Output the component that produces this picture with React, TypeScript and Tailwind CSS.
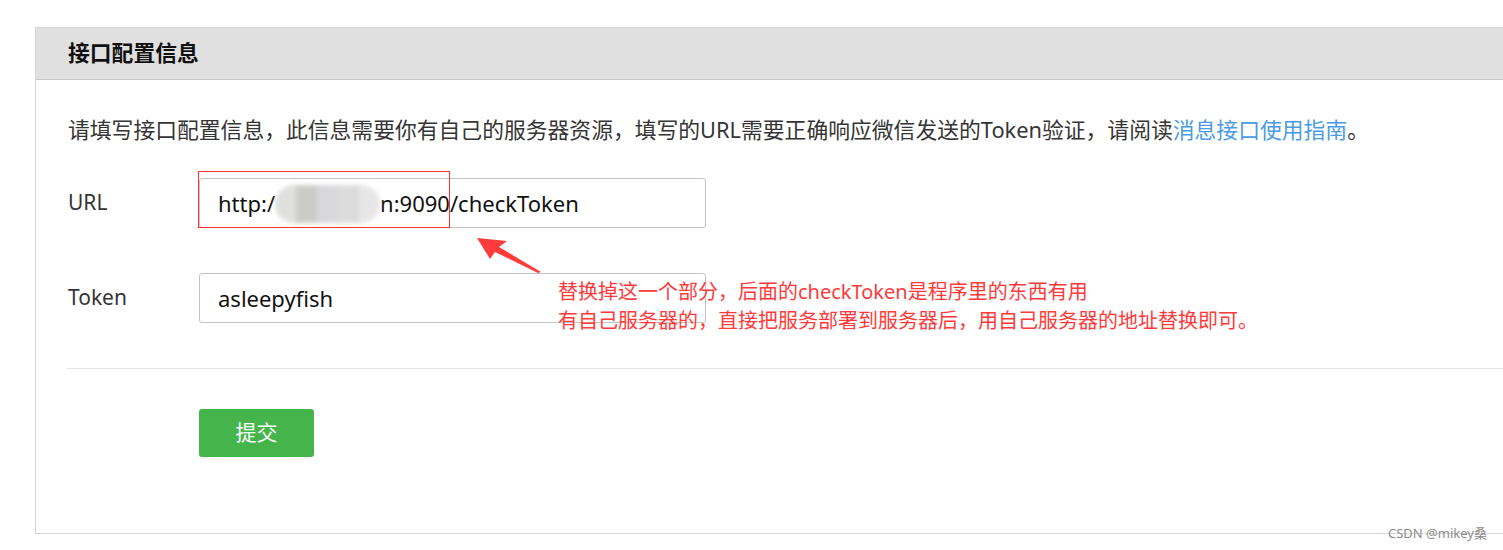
import React from "react";

export default function App() {
  return (
    <div className="relative w-[1503px] h-[550px] overflow-hidden bg-white font-['Noto_Sans','Noto_Sans_CJK_SC',sans-serif] text-[#353535]">
      <div className="pt-[27px] pl-[35px]">
        <div className="h-[507px] border border-r-0 border-[#d6d6d6]">
          <div className="flex h-[52px] items-center border-b border-[#c9c9c9] bg-[#e0e0e0] pl-[32px] text-[21.8px] font-bold text-[#111]">
            接口配置信息
          </div>
          <div className="pl-[32px] pt-[35px]">
            <p className="h-[30px] text-[21.8px] leading-[30px] whitespace-nowrap">
              请填写接口配置信息，此信息需要你有自己的服务器资源，填写的URL需要正确响应微信发送的Token验证，请阅读
              <span className="text-[#4a9be6]">消息接口使用指南</span>。
            </p>
            <div className="mt-[33px] flex items-center">
              <div className="w-[131px] text-[21px]">URL</div>
              <div className="flex h-[50px] w-[507px] items-center rounded-[3px] border border-[#c3c3c3] pl-[18px] text-[22px] text-[#111] whitespace-nowrap">
                <span>http:/</span>
                <span className="relative inline-block h-[40px] w-[105px]">
                  <span className="absolute left-0 top-[2px] flex h-[38px] w-[105px] overflow-hidden rounded-full opacity-90 blur-[2px]">
                    <span className="h-full w-[21px] bg-[#dcdcda]" />
                    <span className="h-full w-[21px] bg-[#c6c6c4]" />
                    <span className="h-full w-[21px] bg-[#d4d4d7]" />
                    <span className="h-full w-[21px] bg-[#d9d9d9]" />
                    <span className="h-full w-[21px] bg-[#e4e4e6]" />
                  </span>
                </span>
                <span>n:9090/checkToken</span>
              </div>
            </div>
            <div className="mt-[45px] flex items-center">
              <div className="w-[131px] text-[21px]">Token</div>
              <div className="flex h-[50px] w-[507px] items-center rounded-[3px] border border-[#c3c3c3] pl-[18px] text-[22px] text-[#111]">
                asleepyfish
              </div>
            </div>
          </div>
          <div className="ml-[31px] mt-[45px] h-px bg-[#e3e3e3]" />
          <div className="pl-[163px] pt-[40px]">
            <button className="flex h-[48px] w-[115px] items-center justify-center rounded-[3px] bg-[#45b54b] text-[21px] text-white">
              提交
            </button>
          </div>
        </div>
      </div>

      {/* annotation box */}
      <div className="absolute left-[198px] top-[171px] h-[57px] w-[252px] border border-[#ff3030]" />

      {/* arrow */}
      <svg className="absolute left-0 top-0" width="1503" height="550">
        <polygon
          points="477,238 507,241 499,247 541,272 538,273 495,252 490,259"
          fill="#ff3b3b"
        />
      </svg>

      {/* annotation text */}
      <div className="absolute left-[558px] top-[277px] text-[20px] leading-[29px] text-[#ff3a3a] whitespace-nowrap">
        <div>替换掉这一个部分，后面的checkToken是程序里的东西有用</div>
        <div>有自己服务器的，直接把服务部署到服务器后，用自己服务器的地址替换即可。</div>
      </div>

      {/* watermark */}
      <div className="absolute left-[1388px] top-[525px] text-[13px] leading-[16px] text-[#8c8c8c] whitespace-nowrap">
        CSDN @mikey桑
      </div>
    </div>
  );
}
